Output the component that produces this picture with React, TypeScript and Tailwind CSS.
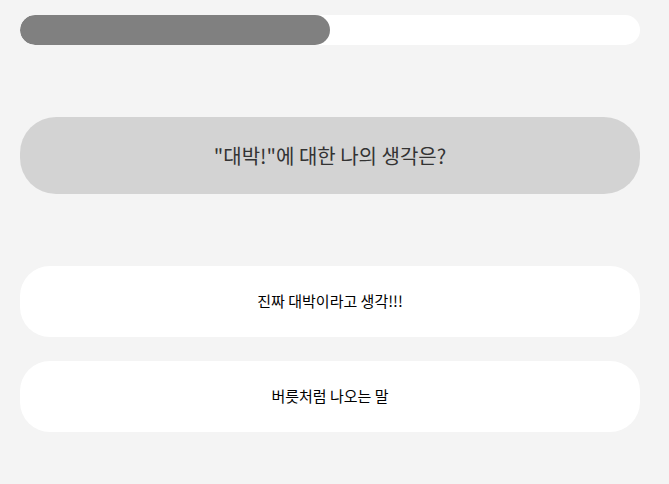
export default function App() {
  const progress = 50;
  const options = ['진짜 대박이라고 생각!!!', '버릇처럼 나오는 말'];

  return (
    <div className="min-h-[484px] bg-[#f4f4f4] px-5 pt-[15px] font-['Noto_Sans_CJK_KR',sans-serif]">
      <div className="w-[620px]">
        {/* Progress */}
        <div className="h-[30px] w-full rounded-full bg-white overflow-hidden">
          <div className="h-full rounded-full bg-[#808080]" style={{ width: `${progress}%` }} />
        </div>

        {/* Question */}
        <div className="mt-[72px] flex h-[77px] items-center justify-center rounded-[36px] bg-[#d3d3d3] text-[20px] text-[#333]">
          "대박!"에 대한 나의 생각은?
        </div>

        {/* Options */}
        <div className="mt-[72px] flex flex-col gap-6">
          {options.map((opt) => (
            <button
              key={opt}
              className="flex h-[71px] w-full items-center justify-center rounded-[30px] bg-white text-[15px] text-black"
            >
              {opt}
            </button>
          ))}
        </div>
      </div>
    </div>
  );
}
